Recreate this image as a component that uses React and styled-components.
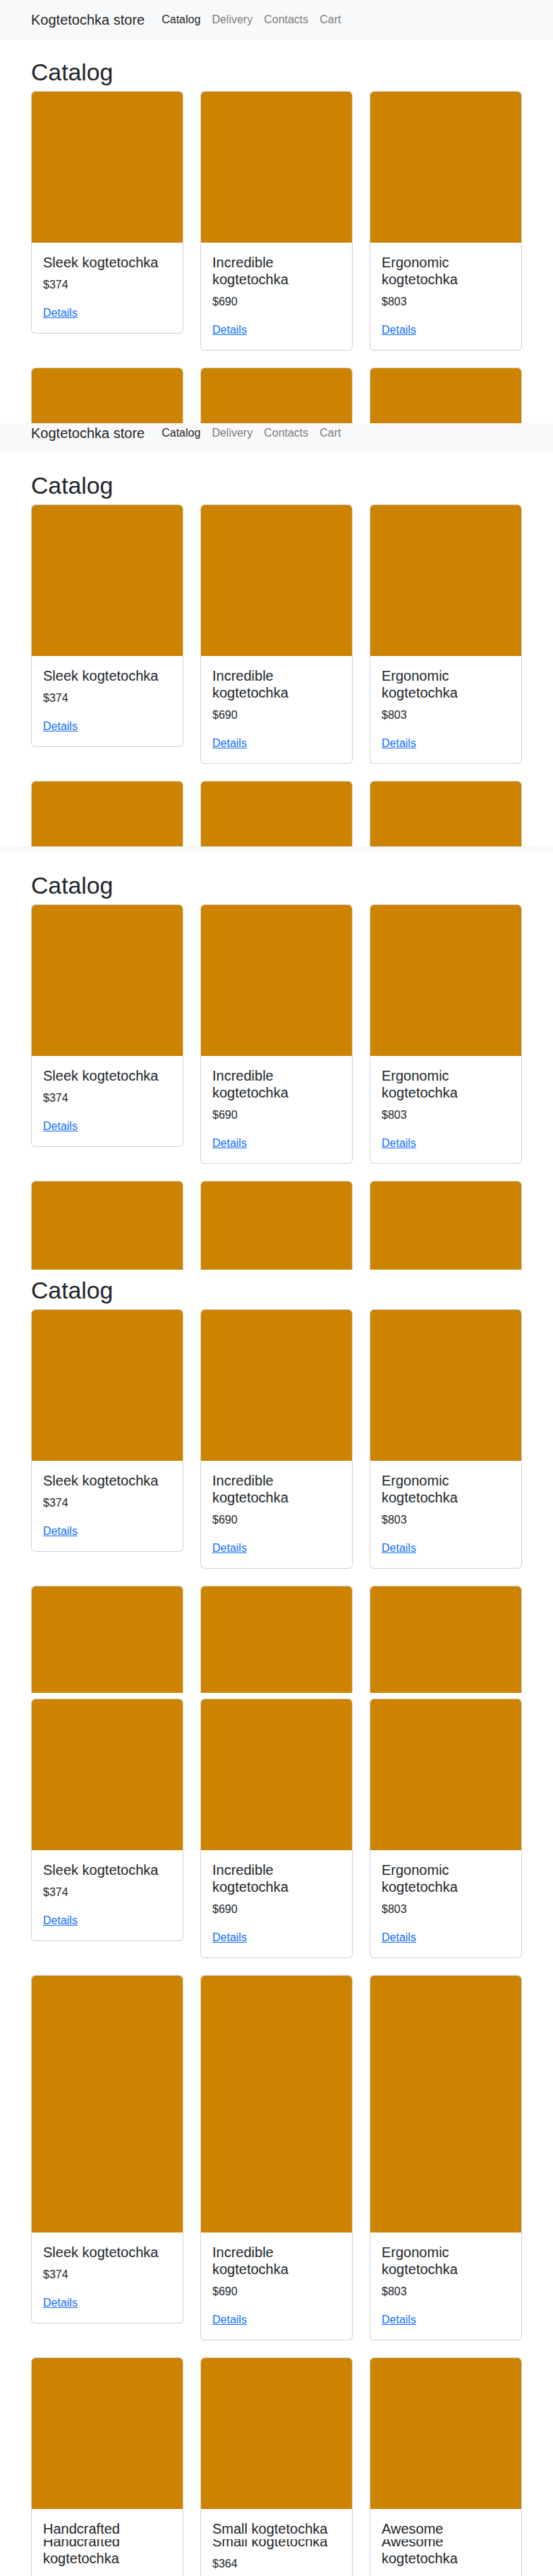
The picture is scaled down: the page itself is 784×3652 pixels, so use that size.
import React from "react";
import styled, { createGlobalStyle } from "styled-components";

const GlobalStyle = createGlobalStyle`
  html, body { margin: 0; padding: 0; background: #fff; }
  body {
    font-family: "Liberation Sans", Arial, sans-serif;
    color: #212529;
    font-size: 16px;
    line-height: 1.5;
  }
  * { box-sizing: border-box; }
`;

const products = [
  { name: "Sleek kogtetochka", price: 374 },
  { name: "Incredible kogtetochka", price: 690 },
  { name: "Ergonomic kogtetochka", price: 803 },
  { name: "Handcrafted kogtetochka", price: 512 },
  { name: "Small kogtetochka", price: 364 },
  { name: "Awesome kogtetochka", price: 248 },
];

const slices = [
  { height: 600, start: 0 },
  { height: 600, start: 14 },
  { height: 600, start: 47 },
  { height: 600, start: 73 },
  { height: 600, start: 121 },
  { height: 600, start: 179 },
  { height: 52, start: 761 },
];

const Capture = styled.div`
  width: 784px;
  display: flex;
  flex-direction: column;
`;

const Slice = styled.section`
  height: ${(p) => p.$height}px;
  overflow: hidden;
`;

const Page = styled.div`
  margin-top: ${(p) => -p.$start}px;
`;

const Navbar = styled.nav`
  background: #f8f9fa;
  padding: 8px 0;
`;

const Container = styled.div`
  width: 720px;
  margin: 0 auto;
  padding: 0 12px;
`;

const NavInner = styled(Container)`
  display: flex;
  align-items: center;
`;

const Brand = styled.a`
  font-size: 20px;
  line-height: 30px;
  padding: 5px 0;
  margin-right: 16px;
  color: rgba(0, 0, 0, 0.9);
  text-decoration: none;
  white-space: nowrap;
`;

const NavList = styled.ul`
  display: flex;
  list-style: none;
  margin: 0;
  padding: 0;
`;

const NavLink = styled.a`
  display: block;
  padding: 8px;
  font-size: 16px;
  line-height: 24px;
  text-decoration: none;
  color: ${(p) => (p.$active ? "rgba(0, 0, 0, 0.9)" : "rgba(0, 0, 0, 0.55)")};
`;

const Main = styled(Container)`
  padding-top: 26px;
  padding-bottom: 24px;
`;

const Heading = styled.h1`
  font-size: 33.76px;
  line-height: 40px;
  font-weight: 500;
  margin: 0 0 7px;
`;

const Grid = styled.div`
  display: grid;
  grid-template-columns: repeat(3, 216px);
  column-gap: 24px;
  row-gap: 24px;
  align-items: start;
`;

const Card = styled.div`
  border: 1px solid rgba(0, 0, 0, 0.175);
  border-radius: 6px;
  background: #fff;
  overflow: hidden;
`;

const CardImage = styled.div`
  width: 100%;
  aspect-ratio: 1 / 1;
  background: #cc8400;
  border-radius: 5px 5px 0 0;
`;

const CardBody = styled.div`
  padding: 16px;
`;

const CardTitle = styled.h5`
  font-size: 20px;
  line-height: 24px;
  font-weight: 500;
  margin: 0 0 8px;
`;

const Price = styled.p`
  margin: 0 0 16px;
  font-size: 16px;
  line-height: 24px;
`;

const DetailsLink = styled.a`
  color: #0d6efd;
  text-decoration: underline;
  font-size: 16px;
  line-height: 24px;
`;

function StorePage({ start }) {
  return (
    <Page $start={start}>
      <Navbar>
        <NavInner>
          <Brand href="#">Kogtetochka store</Brand>
          <NavList>
            <li><NavLink $active href="#">Catalog</NavLink></li>
            <li><NavLink href="#">Delivery</NavLink></li>
            <li><NavLink href="#">Contacts</NavLink></li>
            <li><NavLink href="#">Cart</NavLink></li>
          </NavList>
        </NavInner>
      </Navbar>
      <Main as="main">
        <Heading>Catalog</Heading>
        <Grid>
          {products.map((p) => (
            <Card key={p.name}>
              <CardImage />
              <CardBody>
                <CardTitle>{p.name}</CardTitle>
                <Price>${p.price}</Price>
                <DetailsLink href="#">Details</DetailsLink>
              </CardBody>
            </Card>
          ))}
        </Grid>
      </Main>
    </Page>
  );
}

export default function App() {
  return (
    <>
      <GlobalStyle />
      <Capture>
        {slices.map((s, i) => (
          <Slice key={i} $height={s.height}>
            <StorePage start={s.start} />
          </Slice>
        ))}
      </Capture>
    </>
  );
}
